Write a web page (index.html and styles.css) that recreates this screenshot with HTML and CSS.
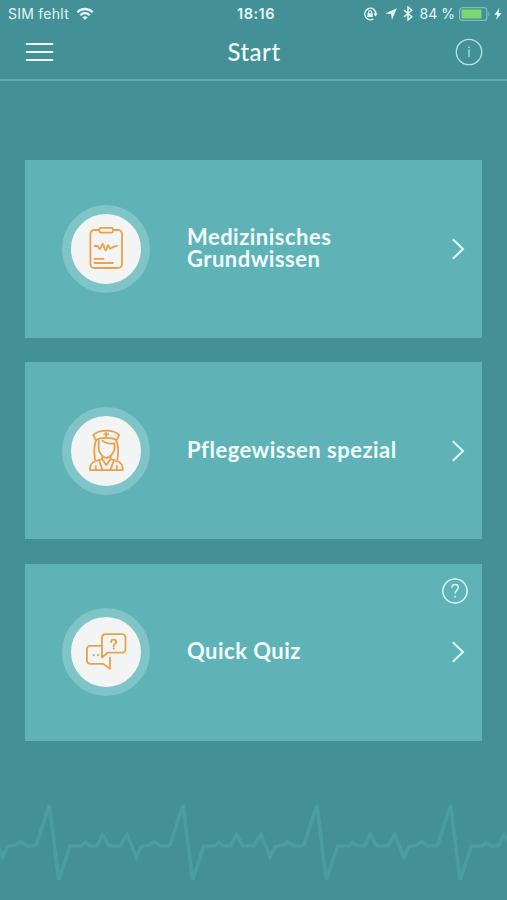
FILE: index.html
```html
<!DOCTYPE html>
<html lang="de">
<head>
    <meta charset="UTF-8">
    <meta name="viewport" content="width=device-width, initial-scale=1.0">
    <title>Start</title>
    <link rel="stylesheet" href="styles.css">
</head>
<body>
    <div class="status-bar">
        <div class="status-left">
            <span class="carrier">SIM fehlt</span>
            <svg width="18" height="14" viewBox="0 0 18 14" fill="none" stroke="currentColor" stroke-width="2.3">
                <path d="M1.3 5.2C5.6 .9 12.4 .9 16.7 5.2"/>
                <path d="M4.2 8.2c2.7-2.7 6.9-2.7 9.6 0"/>
                <path d="M9 13L6.4 10.3c1.5-1.4 3.7-1.4 5.2 0z" fill="currentColor" stroke="none"/>
            </svg>
        </div>
        <span class="time">18:16</span>
        <div class="status-right">
            <svg class="lock" width="15" height="14" viewBox="0 0 15 14" fill="none" stroke="currentColor" stroke-width="1.5">
                <path d="M11 2.5A5.7 5.7 0 1 0 10.4 11.9M11 2.5A5.7 5.7 0 0 1 12.6 7.5"/>
                <path d="M10.3 6.6h4.4l-2.2 2.8z" fill="currentColor" stroke="none"/>
                <path d="M5.5 6.4V5.2a1.6 1.6 0 0 1 3.2 0v1.2" stroke-width="1.1"/>
                <rect x="4.4" y="6.2" width="5.4" height="3.9" rx=".5" fill="currentColor" stroke="none"/>
            </svg>
            <svg class="location" width="12" height="12" viewBox="0 0 12 12" fill="currentColor">
                <path d="M11.9 .3L7 11.8 6.1 6.1.2 5.4z"/>
            </svg>
            <svg class="bluetooth" width="10" height="15" viewBox="0 0 10 15" fill="none" stroke="currentColor" stroke-width="1.5">
                <path d="M1 4.2l7.8 6.5L5 14V1l3.8 3.3L1 10.8"/>
            </svg>
            <span class="percent">84 %</span>
            <svg class="battery" width="31" height="14" viewBox="0 0 31 14">
                <rect x=".6" y=".6" width="27.2" height="12.8" rx="3" fill="none" stroke="#84bcc0" stroke-width="1.2"/>
                <rect x="2.5" y="2.4" width="20" height="9.2" rx="1" fill="#79d970"/>
                <path d="M29.2 4.7c1.6.7 1.6 3.9 0 4.6z" fill="#84bcc0"/>
            </svg>
            <svg class="bolt" width="8" height="12" viewBox="0 0 8 12" fill="currentColor">
                <path d="M5.5 0L.3 6.7h3L2 12l5.7-7H4.5z"/>
            </svg>
        </div>
    </div>

    <header class="header">
        <svg class="menu" width="29" height="20" viewBox="0 0 29 20" stroke="currentColor" stroke-width="2.2" stroke-linecap="round">
            <path d="M1.7 2h25.6M1.7 10h25.6M1.7 18h25.6"/>
        </svg>
        <h1>Start</h1>
        <svg class="info" width="28" height="28" viewBox="0 0 28 28" fill="none" stroke="currentColor" stroke-width="1.3">
            <circle cx="14" cy="14" r="12.7"/>
            <path d="M14 11.5V19"/>
            <circle cx="14" cy="9.4" r=".8" fill="currentColor" stroke="none"/>
        </svg>
    </header>

    <main class="cards">
        <div class="card">
            <div class="icon">
                <svg width="70" height="70" viewBox="0 0 70 70">
                    <rect x="19.4" y="16" width="31.6" height="38" rx="4"/>
                    <rect class="clip" x="28.4" y="13.8" width="13.6" height="4.8" rx="1.5"/>
                    <path d="M23.5 32h3c1.2 0 1.3 3 2.3 3 1.3 0 1.5-5 2.8-5 1.7 0 1.5 6.2 3.1 6.2 1.5 0 1-5 2.3-5 1 0 1 3.5 2.3 3.5s1.3-1.5 2.5-1.5 1.4-1.4 4.2-1.4"/>
                    <path d="M23.5 44.8h9M23.5 49h18.5"/>
                </svg>
            </div>
            <h2>Medizinisches<br>Grundwissen</h2>
            <svg class="arrow" width="14" height="24" viewBox="0 0 14 24"><path d="M1.8 2.2L12 12 1.8 21.8"/></svg>
        </div>

        <div class="card">
            <div class="icon">
                <svg width="70" height="70" viewBox="0 0 70 70">
                    <path d="M24.8 24.2l-2.6-5.1c5.8-6 20.2-6 26 0l-2.6 5.1c-4.7-3-16.1-3-20.8 0z"/>
                    <path d="M35.2 16.2v4.2M33.1 18.3h4.2"/>
                    <path d="M25.2 24.2c-2.6 6-2.2 13-1.2 19.4M45.2 24.2c2.6 6 2.2 13 1.2 19.4"/>
                    <path d="M27.7 24.4v8.2c0 4 4.5 9.4 7.5 9.4s8.4-5.4 8.4-9.4v-5.2c-4.5.4-9.7-.4-12.1-2.7"/>
                    <path d="M31.2 40.6v2.5l4 6 4.5-6v-2.5"/>
                    <path d="M31.2 43l-7.6 2.5c-3.3 1-4.7 4.4-4.7 8.6h32.8c0-4.2-1.4-7.6-4.7-8.6L39.7 43"/>
                    <path d="M28 44.2l3.5 9.9M43 44.2l-3.7 9.9M24.8 50v4M45.8 50v4"/>
                </svg>
            </div>
            <h2>Pflegewissen spezial</h2>
            <svg class="arrow" width="14" height="24" viewBox="0 0 14 24"><path d="M1.8 2.2L12 12 1.8 21.8"/></svg>
        </div>

        <div class="card">
            <svg class="help" width="28" height="28" viewBox="0 0 28 28" fill="none" stroke="currentColor" stroke-width="1.5">
                <circle cx="14" cy="14" r="12.1"/>
                <path d="M10.8 10.7c0-4.4 6.5-4.2 6.5-.2 0 2.8-3.3 2.7-3.3 6.1"/>
                <circle cx="14" cy="19.7" r=".9" fill="currentColor" stroke="none"/>
            </svg>
            <div class="icon">
                <svg width="70" height="70" viewBox="0 0 70 70">
                    <path d="M31 28.8H19.2a3.3 3.3 0 0 0-3.3 3.3v11.5a3.3 3.3 0 0 0 3.3 3.3h13.2l6.6 5V40.5"/>
                    <path d="M34.2 17.2h17a3.3 3.3 0 0 1 3.3 3.3v11.9a3.3 3.3 0 0 1-3.3 3.3H36.6L31 40.5v-20a3.3 3.3 0 0 1 3.2-3.3z"/>
                    <path d="M40.1 25c0-3.2 5-3.1 5-.1 0 2.1-2.5 1.9-2.5 4.3"/>
                    <circle class="dot" cx="42.6" cy="31.5" r="1"/>
                    <circle class="dot" cx="22.7" cy="38.2" r="1.1"/>
                    <circle class="dot" cx="26.9" cy="38.2" r="1.1"/>
                </svg>
            </div>
            <h2>Quick Quiz</h2>
            <svg class="arrow" width="14" height="24" viewBox="0 0 14 24"><path d="M1.8 2.2L12 12 1.8 21.8"/></svg>
        </div>
    </main>

    <svg class="pulse" width="507" height="100" viewBox="0 0 507 100">
        <defs>
            <path id="beat" d="M36 46L49.2 5 58.8 80 70 46H81l4-3.5 5 3.5h7l5.7-11.5L109 46h11l7-11.5L136.3 57l5.2-10.5 8-1.5 4.5-3.5 6.5 4.5h9.3"/>
        </defs>
        <use href="#beat" x="-133.8"/>
        <use href="#beat"/>
        <use href="#beat" x="133.8"/>
        <use href="#beat" x="267.6"/>
        <use href="#beat" x="401.4"/>
    </svg>
</body>
</html>
```

FILE: styles.css
```css
* {
    box-sizing: border-box;
}

body {
    margin: 0;
    height: 900px;
    display: flex;
    flex-direction: column;
    overflow: hidden;
    font-family: Lato, sans-serif;
    color: #f0ffff;
    background-color: #439196;
}

svg {
    display: block;
    flex-shrink: 0;
}

/* Status bar */
.status-bar {
    display: grid;
    grid-template-columns: 1fr auto 1fr;
    align-items: center;
    height: 27px;
    padding: 0 5px 0 8px;
    font-family: Inter, sans-serif;
    font-size: 14px;
    color: #e2f6f7;
}

.status-left,
.status-right {
    display: flex;
    align-items: center;
}

.status-left {
    gap: 7px;
}

.carrier {
    letter-spacing: 0.25px;
}

.status-right {
    justify-content: flex-end;
}

.time {
    padding-left: 2px;
    font-size: 14.5px;
    font-weight: 600;
    letter-spacing: 0.5px;
}

.location {
    margin-left: 7px;
}

.bluetooth {
    margin-left: 6px;
}

.percent {
    margin: 0 4px 0 7px;
    white-space: nowrap;
}

.lock {
    margin-left: -2px;
}

.bolt {
    margin-left: 4px;
}

/* Header */
.header {
    display: grid;
    grid-template-columns: 1fr auto 1fr;
    align-items: center;
    height: 54px;
    padding: 0 24px 2px 25px;
    border-bottom: 2px solid #67abb0;
}

.header h1 {
    margin: 0;
    font-size: 24px;
    font-weight: 500;
    line-height: 30px;
    letter-spacing: 0.5px;
}

.info {
    justify-self: end;
    color: #b5e3e6;
}

/* Cards */
.cards {
    display: flex;
    flex-direction: column;
    gap: 24.5px;
    padding: 79.4px 25px 0;
}

.card {
    position: relative;
    display: flex;
    align-items: center;
    height: 177.2px;
    padding: 0 17px 0 37px;
    background-color: #5fb2b6;
}

.icon {
    width: 88px;
    height: 88px;
    border: 9px solid #7fc4c7;
    border-radius: 50%;
    background-color: #f3f4f4;
}

.icon svg {
    fill: none;
    stroke: #eba04a;
    stroke-width: 1.8;
    stroke-linecap: round;
    stroke-linejoin: round;
}

.icon .clip {
    fill: #f3f4f4;
}

.icon .dot {
    fill: #eba04a;
    stroke: none;
}

.card h2 {
    flex: 1;
    margin: 0 0 2px 37px;
    font-size: 22px;
    font-weight: 700;
    line-height: 22px;
    letter-spacing: 0.48px;
}

.arrow {
    fill: none;
    stroke: #e0fbfc;
    stroke-width: 2;
}

.help {
    position: absolute;
    top: 13px;
    right: 13.5px;
    color: #d6f6f8;
}

/* Heartbeat line */
.pulse {
    margin-top: 59px;
    fill: none;
    stroke: #4b9da1;
    stroke-width: 3.6;
}
```
